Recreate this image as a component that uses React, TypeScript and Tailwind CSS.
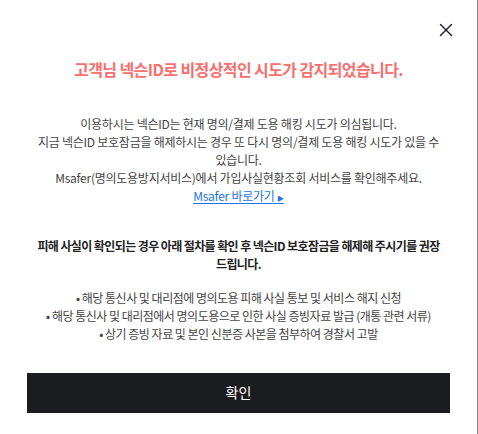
import { X } from "lucide-react";

export default function App() {
  const bullets = [
    "• 해당 통신사 및 대리점에 명의도용 피해 사실 통보 및 서비스 해지 신청",
    "• 해당 통신사 및 대리점에서 명의도용으로 인한 사실 증빙자료 발급 (개통 관련 서류)",
    "• 상기 증빙 자료 및 본인 신분증 사본을 첨부하여 경찰서 고발",
  ];

  return (
    <div
      className="relative h-[434px] w-full bg-white border-r border-[#8a8a8a]"
      style={{ fontFamily: '"Noto Sans CJK KR", "Noto Sans", sans-serif' }}
    >
      <button className="absolute right-[20px] top-[19px] text-[#1f1f2b]">
        <X className="h-[22px] w-[22px]" strokeWidth={1.6} />
      </button>

      <div className="flex flex-col items-center px-[30px] pt-[57px] text-center">
        <h1 className="whitespace-nowrap text-[16px] font-bold leading-[24px] tracking-[-0.6px] text-[#fa6e6e]">
          고객님 넥슨ID로 비정상적인 시도가 감지되었습니다.
        </h1>

        <div className="mt-[34px] whitespace-nowrap text-[12px] leading-[18px] tracking-[-0.25px] text-[#444]">
          <p>이용하시는 넥슨ID는 현재 명의/결제 도용 해킹 시도가 의심됩니다.</p>
          <p>
            지금 넥슨ID 보호잠금을 해제하시는 경우 또 다시 명의/결제 도용 해킹 시도가 있을 수
            <br />
            있습니다.
          </p>
          <p>Msafer(명의도용방지서비스)에서 가입사실현황조회 서비스를 확인해주세요.</p>
          <a href="#" className="text-[#1a73e8] underline underline-offset-2">
            Msafer 바로가기 <span className="text-[7px] align-middle">▶</span>
          </a>
        </div>

        <p className="mt-[30px] whitespace-nowrap text-[12px] font-bold leading-[18px] tracking-[-0.6px] text-[#222]">
          피해 사실이 확인되는 경우 아래 절차를 확인 후 넥슨ID 보호잠금을 해제해 주시기를 권장
          <br />
          드립니다.
        </p>

        <ul className="mt-[16px] whitespace-nowrap text-[12px] leading-[18px] tracking-[-0.5px] text-[#444]">
          {bullets.map((b) => (
            <li key={b}>{b}</li>
          ))}
        </ul>
      </div>

      <div className="px-[27px] pt-[30px]">
        <button className="flex h-[40px] w-full items-center justify-center bg-[#1b1c20] text-[14px] text-white">
          확인
        </button>
      </div>
    </div>
  );
}
